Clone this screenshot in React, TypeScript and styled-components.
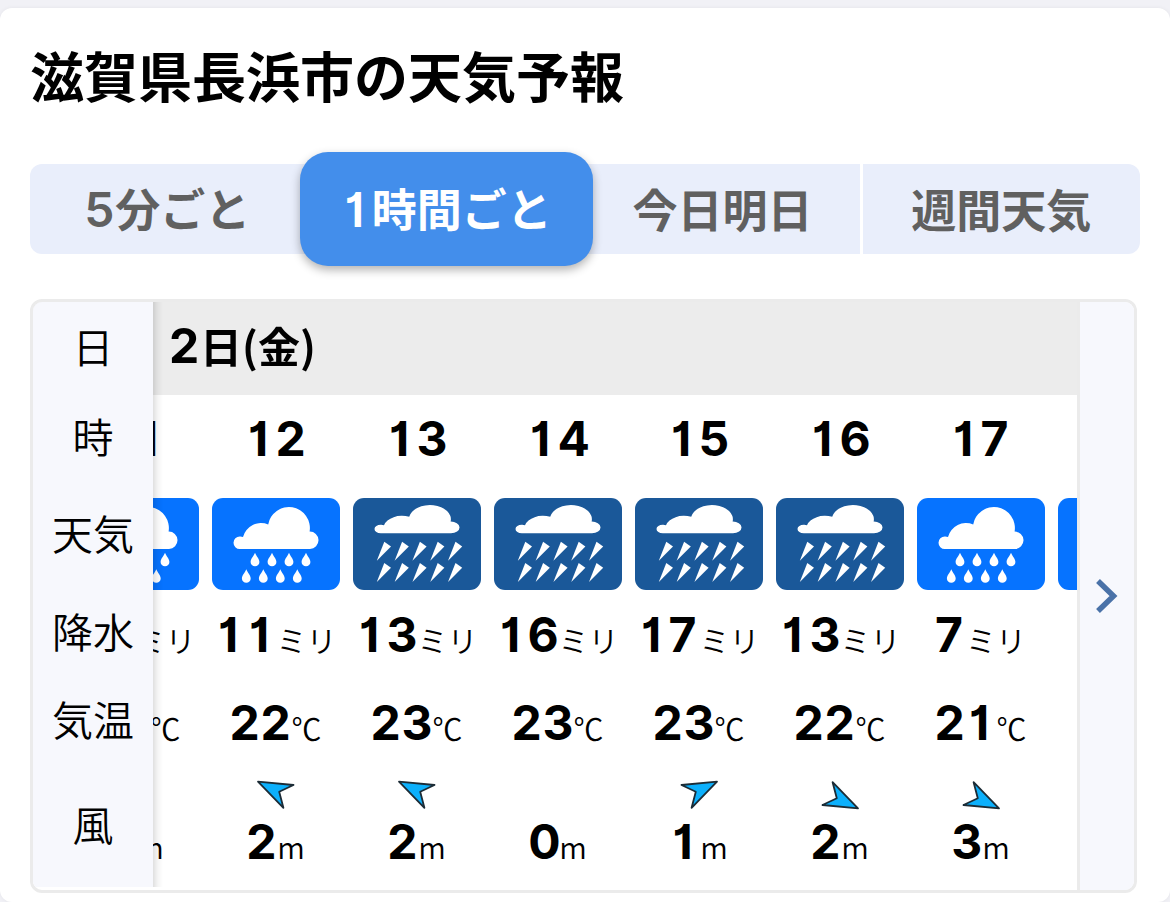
import React, { useRef, useState } from "react";
import styled, { createGlobalStyle } from "styled-components";

const GlobalStyle = createGlobalStyle`
  *, *::before, *::after { box-sizing: border-box; }
  body {
    margin: 0;
    background: #f1f1f6;
    color: #000;
    font-family: "Noto Sans CJK JP", sans-serif;
  }
`;

const Page = styled.main`
  padding-top: 8px;
`;

const Card = styled.section`
  min-height: calc(100vh - 8px);
  padding: 35px 30px 9px;
  background: #fff;
  border-radius: 12px;
  box-shadow: 0 0 4px rgba(0, 0, 0, 0.06);
`;

const Title = styled.h1`
  margin: 0 0 57px;
  font-size: 54px;
  line-height: 64px;
  font-weight: 700;
`;

const Tabs = styled.div`
  display: grid;
  grid-template-columns: 100fr 100fr 100fr 101fr;
  gap: 3px;
  height: 90px;
  margin-bottom: 45px;
`;

const Tab = styled.button<{ $active: boolean }>`
  z-index: ${(p) => (p.$active ? 1 : 0)};
  margin: ${(p) => (p.$active ? "-12px -11px -12px -8px" : "0")};
  padding: 0;
  border: 0;
  border-radius: ${(p) => (p.$active ? "28px" : "0")};
  background: ${(p) => (p.$active ? "#438eeb" : "#e9eefb")};
  box-shadow: ${(p) => (p.$active ? "0 4px 10px rgba(0, 0, 0, 0.3)" : "none")};
  color: ${(p) => (p.$active ? "#fff" : "#606060")};
  font-family: inherit;
  font-size: 45px;
  line-height: 64px;
  font-weight: 700;
  white-space: nowrap;
  cursor: pointer;

  &:first-child { border-top-left-radius: 12px; border-bottom-left-radius: 12px; }
  &:last-child { border-top-right-radius: 12px; border-bottom-right-radius: 12px; }
`;

const Digit = styled.span`
  display: inline-block;
  width: 31px;
  padding-right: 4px;
  text-align: center;
`;

const TabDigit = styled(Digit)`
  font-family: Inter, sans-serif;
  font-size: 48px;
  font-weight: 600;
  font-feature-settings: "cv01";
`;

const Panel = styled.div`
  display: flex;
  margin-right: 3px;
  border: 3px solid #ebebeb;
  border-radius: 12px;
  overflow: hidden;
`;

const Scroller = styled.div`
  flex: 1;
  min-width: 0;
  padding-bottom: 3px;
  overflow-x: auto;
  overflow-y: hidden;
  scrollbar-width: none;
`;

const Table = styled.table`
  width: 1248px;
  margin-left: -89px;
  table-layout: fixed;
  border-collapse: separate;
  border-spacing: 0;
`;

const LabelCol = styled.col`
  width: 120px;
`;

const Row = styled.tr<{ $height: number; $shaded?: boolean }>`
  height: ${(p) => p.$height}px;
  background: ${(p) => (p.$shaded ? "#ececec" : "#fff")};
`;

const RowLabel = styled.th`
  position: sticky;
  left: 0;
  z-index: 1;
  padding: 0 0 8px;
  background: #f7f8fd;
  font-size: 41px;
  line-height: 48px;
  font-weight: 350;

  &::after {
    content: "";
    position: absolute;
    top: 0;
    bottom: 0;
    left: 100%;
    width: 10px;
    background: linear-gradient(to right, rgba(0, 0, 0, 0.12), rgba(0, 0, 0, 0.04) 50%, rgba(0, 0, 0, 0));
  }
`;

const DateCell = styled.th`
  padding: 0 0 6px;
  text-align: left;
  font-size: 42px;
  line-height: 48px;
  font-weight: 700;
`;

const DateText = styled.span`
  position: sticky;
  left: 136px;
  display: inline-block;
`;

const HourCell = styled.th`
  padding: 10px 0 0;
  line-height: 48px;
`;

const Cell = styled.td`
  padding: 12px 0 0;
  text-align: center;
  line-height: 48px;
  white-space: nowrap;
`;

const BottomCell = styled(Cell)`
  padding: 0;
  vertical-align: bottom;
`;

const Num = styled.span`
  font-family: Inter, sans-serif;
  font-size: 48px;
  font-weight: 700;
  font-feature-settings: "cv01";
`;

const Unit = styled.span`
  font-size: 30px;
  font-weight: 350;
`;

const Tile = styled.svg`
  display: block;
  width: 128px;
  height: 92px;
  margin: 0 auto;
`;

const Wind = styled.div`
  display: flex;
  flex-direction: column;
  align-items: center;
  gap: 7px;
  padding-bottom: 11px;
`;

const Arrow = styled.svg`
  width: 40px;
  height: 32px;
`;

const NextButton = styled.button`
  display: flex;
  align-items: center;
  justify-content: center;
  width: 57px;
  padding: 0;
  border: 0;
  border-left: 3px solid #ebebeb;
  background: #f7f8fd;
  cursor: pointer;
`;

type Sky = "rain" | "heavy";
type Direction = "none" | "upLeft" | "upRight" | "downRight";

interface Hour {
  hour: number;
  sky: Sky;
  rain: number;
  temp: number;
  dir: Direction;
  wind: number;
}

const HOURS: Hour[] = [
  { hour: 11, sky: "rain", rain: 11, temp: 22, dir: "none", wind: 2 },
  { hour: 12, sky: "rain", rain: 11, temp: 22, dir: "upLeft", wind: 2 },
  { hour: 13, sky: "heavy", rain: 13, temp: 23, dir: "upLeft", wind: 2 },
  { hour: 14, sky: "heavy", rain: 16, temp: 23, dir: "none", wind: 0 },
  { hour: 15, sky: "heavy", rain: 17, temp: 23, dir: "upRight", wind: 1 },
  { hour: 16, sky: "heavy", rain: 13, temp: 22, dir: "downRight", wind: 2 },
  { hour: 17, sky: "rain", rain: 7, temp: 21, dir: "downRight", wind: 3 },
  { hour: 18, sky: "rain", rain: 5, temp: 21, dir: "downRight", wind: 3 },
];

const CLOUD =
  "M27.8 51A6.3 6.3 0 0 1 27.8 38.4Q29.5 38.3 31 39A18.5 18.5 0 0 1 56.2 26.5A21 21 0 0 1 97.6 33.6A8.7 8.7 0 0 1 98 51Z";
const DROP = "c1.4 3.6 4.4 6 4.4 9.2a4.4 4.3 0 0 1-8.8 0c0-3.2 3-5.6 4.4-9.2z";

function SkyIcon({ sky }: { sky: Sky }) {
  if (sky === "rain") {
    return (
      <Tile viewBox="0 0 128 92" role="img" aria-label="雨">
        <rect width="128" height="92" rx="11" fill="#0673ff" />
        <g fill="#fff">
          <path d={CLOUD} />
          {[43, 60, 77, 94].map((x) => (
            <path key={x} d={`M${x} 54.7${DROP}`} />
          ))}
          {[34.3, 51.3, 68.3, 85.3].map((x) => (
            <path key={x} d={`M${x} 71.3${DROP}`} />
          ))}
        </g>
      </Tile>
    );
  }
  return (
    <Tile viewBox="0 0 128 92" role="img" aria-label="大雨">
      <rect width="128" height="92" rx="11" fill="#1a5899" />
      <g fill="#fff">
        <path d={CLOUD} transform="translate(0 1) scale(1 .673)" />
        {[43.7, 65].map((y) =>
          [0, 1, 2, 3, 4].map((i) => (
            <path key={`${y}-${i}`} d={`M${31.3 + i * 17.8} ${y}l6.7 4.8l-14.2 14.2z`} />
          ))
        )}
      </g>
    </Tile>
  );
}

const ARROW_TRANSFORM: Record<Direction, string> = {
  none: "",
  upLeft: "",
  upRight: "matrix(-1 0 0 1 40 0)",
  downRight: "rotate(180 20 16)",
};

function WindArrow({ dir }: { dir: Direction }) {
  return (
    <Arrow viewBox="0 0 40 32" aria-hidden="true">
      {dir !== "none" && (
        <path
          d="M2 2.6L37.5 6L23.2 12.8L27.4 28.8Z"
          transform={ARROW_TRANSFORM[dir]}
          fill="#0cb0fc"
          stroke="#1c2c36"
          strokeWidth="1.8"
          strokeLinejoin="round"
        />
      )}
    </Arrow>
  );
}

/** Every digit takes the same width, so that the columns line up. */
function Value({ value }: { value: number }) {
  return (
    <Num>
      {String(value)
        .split("")
        .map((d, i) => (
          <Digit key={i}>{d}</Digit>
        ))}
    </Num>
  );
}

const TABS = [
  { digit: "5", text: "分ごと" },
  { digit: "1", text: "時間ごと" },
  { digit: "", text: "今日明日" },
  { digit: "", text: "週間天気" },
];

export default function App() {
  const [active, setActive] = useState(1);
  const scroller = useRef<HTMLDivElement>(null);

  return (
    <>
      <GlobalStyle />
      <Page>
        <Card>
          <Title>滋賀県長浜市の天気予報</Title>
          <Tabs role="tablist">
            {TABS.map((tab, i) => (
              <Tab
                key={tab.text}
                type="button"
                role="tab"
                aria-selected={active === i}
                $active={active === i}
                onClick={() => setActive(i)}
              >
                {tab.digit && <TabDigit>{tab.digit}</TabDigit>}
                {tab.text}
              </Tab>
            ))}
          </Tabs>
          <Panel>
            <Scroller ref={scroller}>
              <Table>
                <colgroup>
                  <LabelCol />
                  {HOURS.map((h) => (
                    <col key={h.hour} />
                  ))}
                </colgroup>
                <tbody>
                  <Row $height={93} $shaded>
                    <RowLabel scope="row">日</RowLabel>
                    <DateCell colSpan={HOURS.length}>
                      <DateText>
                        <Value value={2} />
                        日(金)
                      </DateText>
                    </DateCell>
                  </Row>
                  <Row $height={87}>
                    <RowLabel scope="row">時</RowLabel>
                    {HOURS.map((h) => (
                      <HourCell key={h.hour} scope="col">
                        <Value value={h.hour} />
                      </HourCell>
                    ))}
                  </Row>
                  <Row $height={108}>
                    <RowLabel scope="row">天気</RowLabel>
                    {HOURS.map((h) => (
                      <BottomCell key={h.hour}>
                        <SkyIcon sky={h.sky} />
                      </BottomCell>
                    ))}
                  </Row>
                  <Row $height={87}>
                    <RowLabel scope="row">降水</RowLabel>
                    {HOURS.map((h) => (
                      <Cell key={h.hour}>
                        <Value value={h.rain} />
                        <Unit>ミリ</Unit>
                      </Cell>
                    ))}
                  </Row>
                  <Row $height={90}>
                    <RowLabel scope="row">気温</RowLabel>
                    {HOURS.map((h) => (
                      <Cell key={h.hour}>
                        <Value value={h.temp} />
                        <Unit>℃</Unit>
                      </Cell>
                    ))}
                  </Row>
                  <Row $height={120}>
                    <RowLabel scope="row">風</RowLabel>
                    {HOURS.map((h) => (
                      <BottomCell key={h.hour}>
                        <Wind>
                          <WindArrow dir={h.dir} />
                          <div>
                            <Value value={h.wind} />
                            <Unit>m</Unit>
                          </div>
                        </Wind>
                      </BottomCell>
                    ))}
                  </Row>
                </tbody>
              </Table>
            </Scroller>
            <NextButton
              type="button"
              aria-label="次の時間へ"
              onClick={() => scroller.current?.scrollBy({ left: 141, behavior: "smooth" })}
            >
              <svg width="22" height="34" viewBox="0 0 22 34" aria-hidden="true">
                <path d="M2 2L17.5 17L2 32" fill="none" stroke="#4a72a8" strokeWidth="5.5" />
              </svg>
            </NextButton>
          </Panel>
        </Card>
      </Page>
    </>
  );
}
